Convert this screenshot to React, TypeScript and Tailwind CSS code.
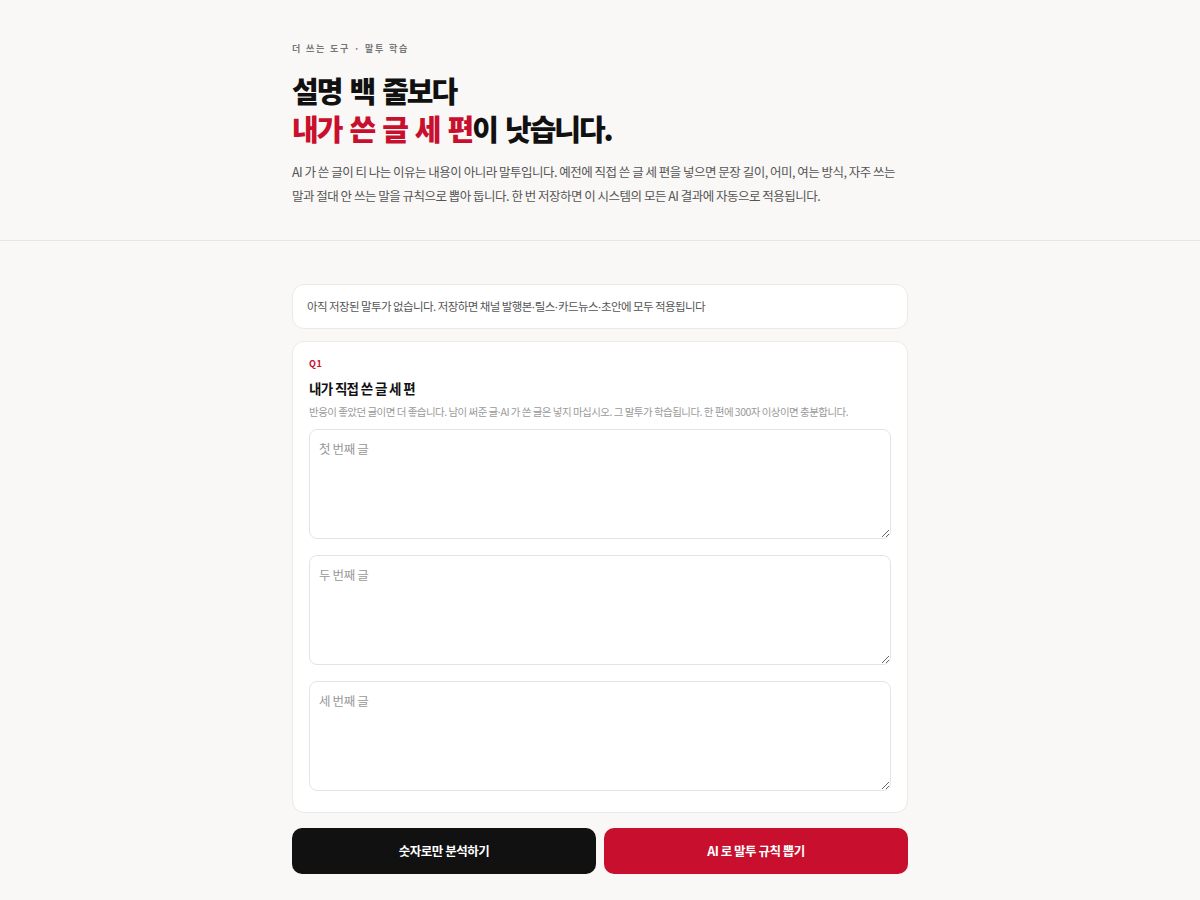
import React from 'react';

const placeholders = ['첫 번째 글', '두 번째 글', '세 번째 글'];

// narrow middle dot (Noto CJK draws it wide)
const Dot = () => <span className="font-['Noto_Sans',sans-serif] tracking-normal">·</span>;

export default function App() {
  return (
    <div className="min-h-screen bg-[#f9f8f6] font-['Noto_Sans_CJK_KR','Noto_Sans',sans-serif] text-[#111]">
      {/* Header */}
      <header className="border-b border-[#e8e6e3]">
        <div className="mx-auto w-[616px] pt-[42px] pb-[32px]">
          <p className="text-[9px] leading-[14px] font-bold tracking-[0.2em] text-[#777]">
            더 쓰는 도구 · 말투 학습
          </p>
          <h1 className="mt-[15px] text-[29px] leading-[38px] font-extrabold tracking-[-0.07em] [word-spacing:0.12em]">
            설명 백 줄보다
            <br />
            <span className="text-[#c8102e]">내가 쓴 글 세 편</span>이 낫습니다.
          </h1>
          <p className="mt-[13px] text-[12.5px] leading-[24px] tracking-[-0.04em] text-[#555]">
            AI 가 쓴 글이 티 나는 이유는 내용이 아니라 말투입니다. 예전에 직접 쓴 글 세 편을 넣으면 문장 길이, 어미, 여는 방식, 자주 쓰는
            <br />
            말과 절대 안 쓰는 말을 규칙으로 뽑아 둡니다. 한 번 저장하면 이 시스템의 모든 AI 결과에 자동으로 적용됩니다.
          </p>
        </div>
      </header>

      {/* Main */}
      <main className="mx-auto w-[616px] pt-[43px] pb-[26px]">
        <div className="rounded-xl border border-[#ebe9e6] bg-white px-[14px] py-[12px]">
          <p className="text-[11.5px] leading-[18px] tracking-[-0.05em] text-[#555]">
            아직 저장된 말투가 없습니다. 저장하면 채널 발행본<Dot />릴스<Dot />카드뉴스<Dot />초안에 모두 적용됩니다
          </p>
        </div>

        <section className="mt-3 rounded-xl border border-[#ebe9e6] bg-white px-4 pt-[15px] pb-[21px]">
          <p className="text-[9px] leading-[14px] font-bold tracking-[0.05em] text-[#c8102e]">Q1</p>
          <h2 className="mt-[7px] text-[13.5px] leading-[20px] font-bold tracking-[-0.05em]">
            내가 직접 쓴 글 세 편
          </h2>
          <p className="mt-[6px] text-[10.5px] leading-[16px] tracking-[-0.05em] text-[#9a9a9a]">
            반응이 좋았던 글이면 더 좋습니다. 남이 써준 글<Dot />AI 가 쓴 글은 넣지 마십시오. 그 말투가 학습됩니다. 한 편에 300자 이상이면 충분합니다.
          </p>
          <div className="mt-[9px] flex flex-col gap-4">
            {placeholders.map((p) => (
              <textarea
                key={p}
                placeholder={p}
                className="block h-[110px] w-full resize-y rounded-lg border border-[#e6e4e1] bg-white px-[9px] py-[9px] text-[12.5px] leading-[20px] tracking-[-0.03em] text-[#111] placeholder:text-[#999] outline-none"
              />
            ))}
          </div>
        </section>

        <div className="mt-[15px] grid grid-cols-2 gap-2">
          <button className="h-[46px] rounded-[10px] bg-[#111] text-[12.5px] font-bold tracking-[-0.04em] text-white">
            숫자로만 분석하기
          </button>
          <button className="h-[46px] rounded-[10px] bg-[#c8102e] text-[12.5px] font-bold tracking-[-0.04em] text-white">
            AI 로 말투 규칙 뽑기
          </button>
        </div>
      </main>
    </div>
  );
}
